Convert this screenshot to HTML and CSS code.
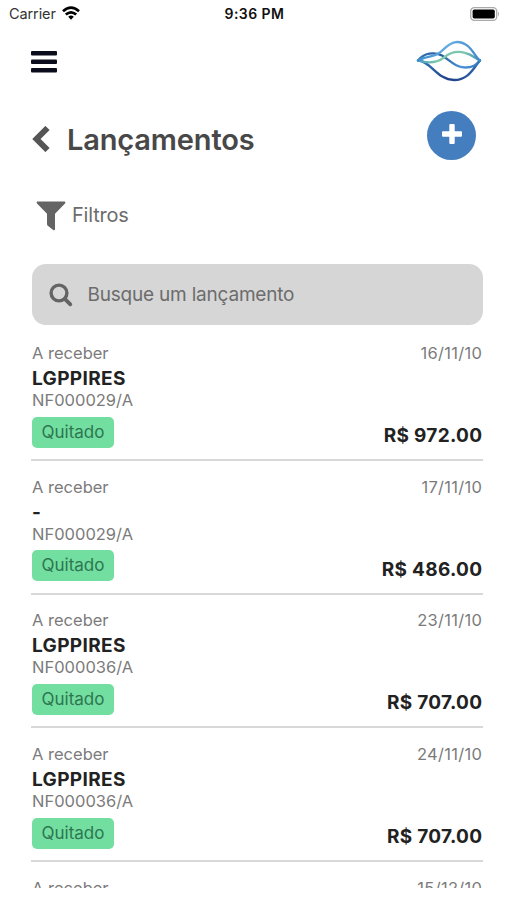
FILE: index.html
```html
<!DOCTYPE html>
<html lang="pt-BR">
<head>
<meta charset="utf-8">
<title>Lançamentos</title>
<link rel="stylesheet" href="styles.css">
</head>
<body>
<div class="screen">
  <div class="status">
    <div class="carrier"><span>Carrier</span>
      <svg class="wifi" viewBox="0 0 18 14" width="18" height="14"><g fill="none" stroke="#000" stroke-width="2.7"><path d="M1 5.2Q9-2 17 5.2"/><path d="M3.8 8.6Q9 4 14.2 8.6"/></g><path d="M6.2 10.8Q9 8.2 11.8 10.8L9 13.7Z"/></svg>
    </div>
    <time class="clock">9:36 PM</time>
    <svg class="battery" viewBox="0 0 30 14" width="30" height="14"><rect x=".7" y=".7" width="26" height="12.6" rx="3.6" fill="#fff" stroke="#aaa" stroke-width="1.3"/><rect x="2.6" y="2.6" width="22.2" height="8.8" rx="1.6"/><path d="M28 4.6Q30 7 28 9.4Z" fill="#aaa"/></svg>
  </div>
  <header class="top">
    <svg class="menu" viewBox="0 0 26 22" width="26" height="22" fill="#0b0d1c"><rect width="26" height="4.4" rx="1"/><rect y="8.5" width="26" height="4.4" rx="1"/><rect y="17" width="26" height="4.4" rx="1"/></svg>
    <svg class="logo" viewBox="0 0 66 42" width="66" height="42" fill="none" stroke-width="2.3" stroke-linecap="round">
      <defs>
        <linearGradient id="sky" x1="0" x2="1"><stop stop-color="#3c8ed0"/><stop offset=".5" stop-color="#67aee4"/><stop offset="1" stop-color="#4188c8"/></linearGradient>
        <linearGradient id="mid" x1="0" x2="1"><stop stop-color="#3477b8"/><stop offset=".35" stop-color="#285999"/><stop offset=".7" stop-color="#4a94d8"/><stop offset="1" stop-color="#3477bb"/></linearGradient>
        <linearGradient id="deep" x1="0" x2="1"><stop stop-color="#3479b7"/><stop offset=".5" stop-color="#203f87"/><stop offset="1" stop-color="#2f69ad"/></linearGradient>
        <linearGradient id="mint" x1="0" x2="1"><stop stop-color="#4b9ec9"/><stop offset=".3" stop-color="#7bc8ab"/><stop offset=".75" stop-color="#7ac6ab"/><stop offset="1" stop-color="#408bc3"/></linearGradient>
      </defs>
      <path stroke="url(#deep)" d="M2 20.5C15 21 21 40 38 40C53 40 58 27 64 20.5"/>
      <path stroke="url(#mid)" d="M2 20.5C8 13 18 11.5 26 15.5C34 20 39 27.5 49 27.5C57 27.5 60 25 64 20.5"/>
      <path stroke="url(#mint)" d="M2 20.5C12 23.5 21 23 28 17.5C34 12.5 42 11 49 12.8C56 14.5 59 18 64 20.5"/>
      <path stroke="url(#sky)" d="M2 20.5C9 16.5 18 17 24 12.5C32 5 36 2 41 2C54 2 58 16 64 20.5"/>
    </svg>
  </header>
  <div class="heading">
    <svg class="back" viewBox="0 0 18 26" width="18" height="26"><path d="M15.5 2L4.5 13L15.5 24" fill="none" stroke="#555" stroke-width="6"/></svg>
    <h1>Lançamentos</h1>
    <button class="add" aria-label="Adicionar"><svg viewBox="0 0 20 20" width="20" height="20" fill="#fff"><rect x="7.3" width="5.4" height="20" rx="1"/><rect y="7.3" width="20" height="5.4" rx="1"/></svg></button>
  </div>
  <div class="filters">
    <svg viewBox="0 0 30 30" width="30" height="30"><path d="M1.2.5H28.8Q30 1.4 29 2.6L19 12.7V28.2Q18.8 30 17.2 29L11.8 24.8Q11 24.2 11 23V12.7L1 2.6Q0 1.4 1.2.5Z" fill="#646464"/></svg>
    <span>Filtros</span>
  </div>
  <div class="search">
    <svg viewBox="0 0 24 24" width="24" height="24" fill="none" stroke="#646464"><circle cx="10" cy="10" r="7.9" stroke-width="3.4"/><path d="M15.8 15.8L21.3 21.3" stroke-width="3.8" stroke-linecap="round"/></svg>
    <span>Busque um lançamento</span>
  </div>
  <main class="list">
    <article class="row"><div><p class="kind">A receber</p><p class="name">LGPPIRES</p><p class="doc">NF000029/A</p><span class="badge">Quitado</span></div><div class="side"><span class="date">16/11/10</span><strong class="price">R$ 972.00</strong></div></article>
    <article class="row"><div><p class="kind">A receber</p><p class="name">-</p><p class="doc">NF000029/A</p><span class="badge">Quitado</span></div><div class="side"><span class="date">17/11/10</span><strong class="price">R$ 486.00</strong></div></article>
    <article class="row"><div><p class="kind">A receber</p><p class="name">LGPPIRES</p><p class="doc">NF000036/A</p><span class="badge">Quitado</span></div><div class="side"><span class="date">23/11/10</span><strong class="price">R$ 707.00</strong></div></article>
    <article class="row"><div><p class="kind">A receber</p><p class="name">LGPPIRES</p><p class="doc">NF000036/A</p><span class="badge">Quitado</span></div><div class="side"><span class="date">24/11/10</span><strong class="price">R$ 707.00</strong></div></article>
    <article class="row"><div><p class="kind">A receber</p></div><div class="side"><span class="date">15/12/10</span></div></article>
  </main>
</div>
</body>
</html>
```
FILE: styles.css
```css
* { box-sizing: border-box; margin: 0; padding: 0; }
body { background: #fff; font-family: Inter, "Liberation Sans", sans-serif; color: #222; overflow: hidden; }
svg { display: block; flex: none; }
.screen { width: 507px; height: 900px; overflow: hidden; white-space: nowrap; }
.status { height: 27px; padding: 0 7px 0 9px; display: grid; grid-template-columns: 1fr auto 1fr; align-items: center; font-size: 14.5px; }
.carrier { display: flex; align-items: center; gap: 6px; color: #333; letter-spacing: -.1px; }
.wifi { margin-top: -2px; }
.clock { font-weight: 600; font-size: 14px; letter-spacing: .45px; color: #111; }
.battery { justify-self: end; }
.top { height: 69px; padding: 13px 25px 0 31px; display: flex; justify-content: space-between; }
.menu { margin-top: 11px; }
.heading { height: 78px; padding: 0 31px 0 32px; display: flex; align-items: center; }
h1 { font-size: 29px; line-height: 36px; font-weight: 600; color: #484848; margin: 10px 0 0 17px; letter-spacing: -.15px; }
.back { margin-top: 8px; }
.add { width: 49px; height: 49px; border: 0; border-radius: 50%; background: #457ebf; margin-left: auto; display: grid; place-items: center; padding-bottom: 2px; }
.filters { height: 90px; padding: 26px 36px; display: flex; gap: 6px; font-size: 20px; line-height: 30px; letter-spacing: -.2px; color: #6c6c6c; }
.search { height: 61px; margin: 0 24px 0 32px; padding: 0 17px; display: flex; align-items: center; gap: 14.5px; border-radius: 14px; background: #d6d6d6; color: #6c6c6c; font-size: 19px; letter-spacing: -.2px; }
.search span { margin-top: -1px; }
.filters svg { margin-top: 1px; }
.list { height: 563px; padding: 2.4px 24px 0 31px; overflow: hidden; }
.row { height: 133.6px; padding: 14.8px 1px 0; display: flex; justify-content: space-between; border-bottom: 2px solid #d8d8d8; }
.kind, .date, .doc { font-size: 16.5px; line-height: 22px; color: #7b7b7b; }
.date { letter-spacing: .3px; margin-right: -.3px; }
.name { font-size: 19px; line-height: 26px; font-weight: 700; letter-spacing: .35px; padding-top: 2px; }
.doc { line-height: 20px; margin-top: -2px; }
.badge { display: block; width: 82px; height: 31px; margin-top: 6.6px; border-radius: 5px; background: #72dea0; color: #2d7650; font-size: 17px; line-height: 31px; text-align: center; }
.side { display: flex; flex-direction: column; align-items: flex-end; justify-content: space-between; padding-bottom: 10px; }
.price { font-size: 19px; line-height: 26px; font-weight: 700; letter-spacing: .3px; margin-right: -.3px; }
```
